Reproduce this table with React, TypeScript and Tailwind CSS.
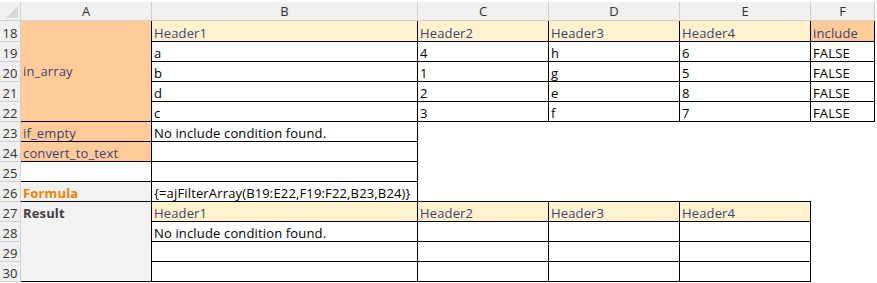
import React from "react";

const FONT = { fontFamily: '"Open Sans", "Noto Sans", Arial, sans-serif' };

type CellProps = {
  className?: string;
  children?: React.ReactNode;
  align?: "end" | "center" | "start";
};

function Cell({ className = "", children, align = "end" }: CellProps) {
  const al =
    align === "end" ? "items-end" : align === "center" ? "items-center" : "items-start";
  return (
    <div
      className={`flex ${al} overflow-hidden whitespace-nowrap pl-[2px] text-[13px] leading-[16px] tracking-[0.15px] ${className}`}
    >
      {children}
    </div>
  );
}

const B = "border-r border-b border-black";
const INPUT = "bg-[#ffcc99] text-[#3f3f76]";
const HDR = "bg-[#fff2cc] text-[#3f3f76]";

function RowHead({ n }: { n: number }) {
  return (
    <div className="flex items-end justify-center bg-[#f0f0f0] border-r border-b border-[#d0d0d0] text-[13px] leading-[16px] text-[#333]">
      {n}
    </div>
  );
}

function ColHead({ l }: { l: string }) {
  return (
    <div className="flex items-center justify-center bg-[#f0f0f0] border-r border-b border-[#d0d0d0] text-[13px] leading-[16px] text-[#333]">
      {l}
    </div>
  );
}

export default function App() {
  return (
    <div className="w-[877px] h-[283px] bg-white pt-[2px] text-black" style={FONT}>
      <div className="grid grid-cols-[21px_131px_266px_131px_131px_131px_64px] grid-rows-[19px_21px_repeat(12,20px)]">
        {/* column header */}
        <div className="flex items-end justify-end bg-[#f0f0f0] border-r border-b border-[#d0d0d0] pr-[2px] pb-[2px]">
          <svg width="12" height="12" viewBox="0 0 12 12">
            <polygon points="12,0 12,12 0,12" fill="#d8d8d8" />
          </svg>
        </div>
        <ColHead l="A" />
        <ColHead l="B" />
        <ColHead l="C" />
        <ColHead l="D" />
        <ColHead l="E" />
        <ColHead l="F" />

        {/* row 18 */}
        <RowHead n={18} />
        <Cell className={`row-span-5 ${INPUT} ${B}`} align="center">
          in_array
        </Cell>
        <Cell className={`${HDR} ${B}`}>Header1</Cell>
        <Cell className={`${HDR} ${B}`}>Header2</Cell>
        <Cell className={`${HDR} ${B}`}>Header3</Cell>
        <Cell className={`${HDR} ${B}`}>Header4</Cell>
        <Cell className={`${INPUT} ${B}`}>include</Cell>

        {/* rows 19-22 */}
        {[
          [19, "a", "4", "h", "6"],
          [20, "b", "1", "g", "5"],
          [21, "d", "2", "e", "8"],
          [22, "c", "3", "f", "7"],
        ].map((r) => (
          <React.Fragment key={r[0] as number}>
            <RowHead n={r[0] as number} />
            <Cell className={B}>{r[1]}</Cell>
            <Cell className={B}>{r[2]}</Cell>
            <Cell className={B}>{r[3]}</Cell>
            <Cell className={B}>{r[4]}</Cell>
            <Cell className={B}>FALSE</Cell>
          </React.Fragment>
        ))}

        {/* row 23 */}
        <RowHead n={23} />
        <Cell className={`${INPUT} ${B}`}>if_empty</Cell>
        <Cell className={B}>No include condition found.</Cell>
        <Cell />
        <Cell />
        <Cell />
        <Cell />

        {/* row 24 */}
        <RowHead n={24} />
        <Cell className={`${INPUT} ${B}`}>convert_to_text</Cell>
        <Cell className={B} />
        <Cell />
        <Cell />
        <Cell />
        <Cell />

        {/* row 25 */}
        <RowHead n={25} />
        <Cell className={B} />
        <Cell className={B} />
        <Cell />
        <Cell />
        <Cell />
        <Cell />

        {/* row 26 */}
        <RowHead n={26} />
        <Cell className={`bg-[#f2f2f2] font-bold text-[#fa7d00] ${B}`}>Formula</Cell>
        <Cell className={B}>{"{=ajFilterArray(B19:E22,F19:F22,B23,B24)}"}</Cell>
        <Cell className="border-b border-black" />
        <Cell className="border-b border-black" />
        <Cell className="border-b border-black" />
        <Cell />

        {/* row 27 */}
        <RowHead n={27} />
        <div className={`row-span-4 bg-[#f2f2f2] ${B} flex flex-col`}>
          <div className="flex h-[19px] items-end pl-[2px] text-[13px] leading-[16px] tracking-[0.15px] font-bold text-[#3f3f3f]">
            Result
          </div>
        </div>
        <Cell className={`${HDR} ${B}`}>Header1</Cell>
        <Cell className={`${HDR} ${B}`}>Header2</Cell>
        <Cell className={`${HDR} ${B}`}>Header3</Cell>
        <Cell className={`${HDR} ${B}`}>Header4</Cell>
        <Cell />

        {/* rows 28-30 */}
        {[28, 29, 30].map((n) => (
          <React.Fragment key={n}>
            <RowHead n={n} />
            <Cell className={B}>{n === 28 ? "No include condition found." : ""}</Cell>
            <Cell className={B} />
            <Cell className={B} />
            <Cell className={B} />
            <Cell />
          </React.Fragment>
        ))}
      </div>
    </div>
  );
}
